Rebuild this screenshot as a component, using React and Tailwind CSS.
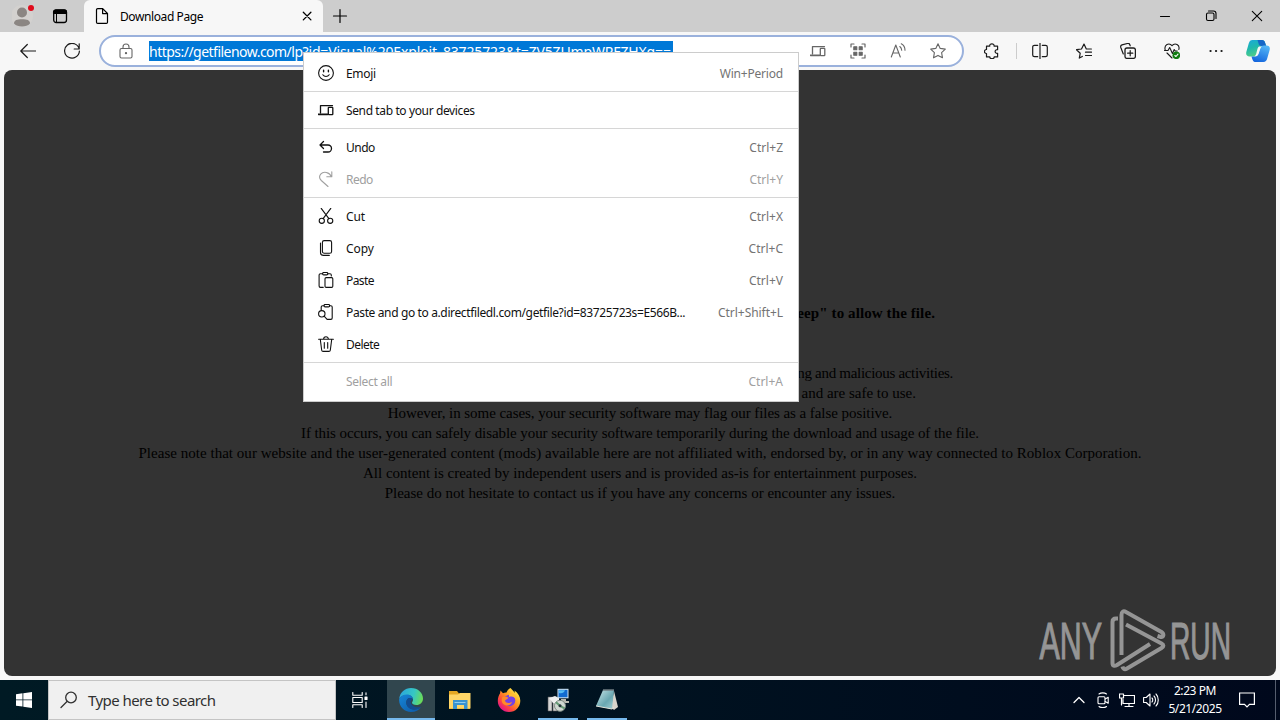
const menuGroups = [
  [{ label: "Emoji", keys: "Win+Period", icon: "emoji", track: "tracking-[-0.3px]", keyTrack: "tracking-[-0.2px]" }],
  [{ label: "Send tab to your devices", keys: "", icon: "devices", track: "tracking-[-0.38px]", keyTrack: "" }],
  [
    { label: "Undo", keys: "Ctrl+Z", icon: "undo", track: "tracking-[-0.5px]", keyTrack: "tracking-[0px]" },
    { label: "Redo", keys: "Ctrl+Y", icon: "redo", track: "tracking-[-0.5px]", keyTrack: "tracking-[0px]", disabled: true },
  ],
  [
    { label: "Cut", keys: "Ctrl+X", icon: "cut", track: "tracking-[-0.1px]", keyTrack: "tracking-[0px]" },
    { label: "Copy", keys: "Ctrl+C", icon: "copy", track: "tracking-[-0.1px]", keyTrack: "tracking-[0px]" },
    { label: "Paste", keys: "Ctrl+V", icon: "paste", track: "tracking-[-0.6px]", keyTrack: "tracking-[0px]" },
    { label: "Paste and go to a.directfiledl.com/getfile?id=83725723s=E566B...", keys: "Ctrl+Shift+L", icon: "pasteGo", track: "tracking-[-0.37px]", keyTrack: "tracking-[-0.05px]" },
    { label: "Delete", keys: "", icon: "trash", track: "tracking-[-0.55px]", keyTrack: "" },
  ],
  [{ label: "Select all", keys: "Ctrl+A", icon: "", track: "tracking-[-0.3px]", keyTrack: "tracking-[0px]", disabled: true }],
];

const icons = {
  emoji: (
    <>
      <circle cx="8" cy="8" r="7.4" />
      <path d="M4.8 9.8c1.6 2.3 4.8 2.3 6.4 0" />
      <path d="M5.6 5.2v1.6M10.4 5.2v1.6" strokeWidth="1.4" />
    </>
  ),
  devices: (
    <>
      <path d="M2.5 11V3.6h12" strokeWidth="1.3" />
      <path d="M0.5 12.3h9" strokeWidth="1.8" />
      <rect x="10.3" y="5.4" width="4.5" height="7.2" rx="0.6" strokeWidth="1.3" />
    </>
  ),
  undo: <path d="M5.5 2.5 2 6l3.5 3.5M2 6h8a3.5 3.5 0 0 1 0 7H5.5" strokeWidth="1.3" />,
  redo: <path d="M13.8 0.8v5h-5M13.5 5.8C11.5 1 5.5-.2 2.7 3.2c-1.8 2.3-1.2 4.6.6 6.3l6.7 6" strokeWidth="1.1" />,
  cut: (
    <>
      <circle cx="3.8" cy="12.8" r="2.6" />
      <circle cx="12.2" cy="12.8" r="2.6" />
      <path d="M3.2 .4l7.7 10.2M12.8 .4 5.1 10.6" />
    </>
  ),
  copy: (
    <>
      <rect x="4.4" y=".6" width="9.2" height="12.6" rx="1.8" />
      <path d="M2.5 3v9.4c0 1.8 1 3 2.8 3h6" />
    </>
  ),
  paste: (
    <>
      <path d="M5.2 15.4H2.4c-.8 0-1.3-.5-1.3-1.3V3c0-.8.5-1.3 1.3-1.3h2.2M9.8 1.7H12c.8 0 1.3.5 1.3 1.3v1" />
      <rect x="4.6" y=".5" width="5.2" height="2.4" rx="1.1" />
      <rect x="7" y="5.6" width="7.8" height="9.8" rx="1.2" />
    </>
  ),
  pasteGo: (
    <>
      <path d="M3.2 6V3c0-.8.5-1.3 1.3-1.3h1.600M11.600 1.700h1.300c.8 0 1.300.5 1.300 1.300v11.100c0 .8-.5 1.300-1.300 1.300H9.500" />
      <rect x="6" y=".5" width="5.6" height="2.4" rx="1.1" />
      <circle cx="3.8" cy="9.800" r="3.200" />
      <path d="m6.100 12.100 3 3.200" />
    </>
  ),
  trash: (
    <>
      <path d="M.6 3.3h14.8M5.6 3.2C5.6-.1 10.4-.1 10.4 3.2M2.3 3.5l1.4 10.7c.1.8.6 1.2 1.4 1.2h5.8c.8 0 1.3-.4 1.4-1.2l1.4-10.7M6.3 6.5v5.7M9.7 6.5v5.7" />
    </>
  ),
};

const Icon = ({ children, className = "w-4 h-4", box = "0 0 16 16" }) => (
  <svg
    viewBox={box}
    className={`block shrink-0 ${className}`}
    fill="none"
    stroke="currentColor"
    strokeWidth="1.1"
    strokeLinecap="round"
    strokeLinejoin="round"
  >
    {children}
  </svg>
);

const TabStrip = () => (
  <div className="flex h-8 bg-[#cdcdcd]">
    <div className="flex w-[84px] items-center rounded-br-md pl-3">
      <svg viewBox="0 0 24 24" className="h-6 w-6">
        <circle cx="10" cy="12" r="11" fill="#d3d1cf" />
        <circle cx="10" cy="8.5" r="5" fill="#8b8683" />
        <path d="M2 19.500c0-3.500 3-4.300 8-4.300s8 .8 8 4.300c-2 2.200-4.600 3-8 3s-6-.8-8-3z" fill="#8b8683" />
        <circle cx="19" cy="4" r="3" fill="#e00b1c" />
      </svg>
      <Icon className="ml-4 h-4 w-4">
        <rect x="1.7" y="2" width="12.8" height="12.5" rx="2.5" strokeWidth="1.3" />
        <path d="M1.5 5.500V4c0-1 .8-2 2-2h9c1.200 0 2 1 2 2v1.500z" fill="currentColor" />
        <path d="M4.500 5v9" strokeWidth="1" />
      </Icon>
    </div>
    <div className="flex w-[239px] items-center rounded-t-md bg-[#f7f7f7] pr-2 pl-[10px]">
      <Icon>
        <path d="M2.500 1.800c0-.7.5-1.200 1.200-1.200h5l4.800 4.900v8.700c0 .7-.5 1.200-1.200 1.200H3.700c-.7 0-1.200-.5-1.200-1.200zM8.600.8v4.800h4.800" strokeWidth="1.2" />
      </Icon>
      <span className="ml-[10px] pt-px text-[12px] tracking-[-0.4px] text-black">Download Page</span>
      <Icon className="ml-auto h-4 w-4">
        <path d="m4.300 4.300 7.600 7.600M11.900 4.300l-7.600 7.600" strokeWidth="1.3" />
      </Icon>
    </div>
    <div className="flex flex-1 items-center pl-[9px]">
      <Icon>
        <path d="M8 1.500v13M1.500 8h13" strokeWidth="1.2" />
      </Icon>
      <div className="mr-[15px] ml-auto flex gap-[30px]">
        <Icon>
          <path d="M3.500 8.500h9" />
        </Icon>
        <Icon>
          <rect x="3.500" y="5" width="7.500" height="7.500" rx="1.500" />
          <path d="M5.500 3h5c1.500 0 2.500 1 2.500 2.500v5" />
        </Icon>
        <Icon>
          <path d="m3.300 3.300 9.400 9.400M12.700 3.300l-9.400 9.400" />
        </Icon>
      </div>
    </div>
  </div>
);

const CopilotLogo = () => (
  <svg viewBox="0 0 24 22" className="h-[22px] w-6">
    <defs>
      <linearGradient id="cpA" x1="0" y1="0" x2=".4" y2="1">
        <stop offset="0" stopColor="#1aa8dd" />
        <stop offset=".5" stopColor="#20b8ad" />
        <stop offset="1" stopColor="#53cf86" />
      </linearGradient>
      <linearGradient id="cpB" x1=".7" y1="0" x2=".3" y2="1">
        <stop offset="0" stopColor="#53b6f6" />
        <stop offset="1" stopColor="#1465dd" />
      </linearGradient>
    </defs>
    <path d="M6.500 0h9.500c1.700 0 2.600 1 3.100 2.700L20.200 6h-2.700c-2 0-3 1-3.600 3L12.500 13c-.6 2-1.500 3.500-4 3.500h-5C1 16.500-.3 15 .3 12L2.800 3.300C3.400 1.200 4.500 0 6.500 0z" fill="url(#cpA)" />
    <path d="M11.500 0H16c1.700 0 2.600 1 3.100 2.700L20.200 6h-4.500c-2 0-3-1-3.300-3z" fill="#1666c7" />
    <path d="M18 5.500h2.500c2.500 0 3.800 1.500 3.200 4.300l-2.500 8.700c-.6 2.200-1.700 3.500-3.700 3.500H9C7.500 22 6.500 20.500 5.500 16.500h3c2.500 0 3.400-1.500 4-3.500l1.500-4.500c.6-1.900 1.800-3 4-3z" fill="url(#cpB)" />
    <path d="M13.300 6.500h2.400c-.8.700-1.200 1.500-1.500 2.500l-1.500 4.500c-.5 1.500-1.200 2.500-2.700 2.800H8.300c1.200-.7 1.500-1.300 1.900-2.500l1.300-5c.4-1.300.9-2 1.800-2.300z" fill="#f7f7f7" />
  </svg>
);

const Toolbar = () => (
  <div className="flex h-[38px] items-center bg-[#f7f7f7] pr-[10px] pl-5 text-[#1b1b1b]">
    <Icon>
      <path d="M7.300 1.500.8 8l6.500 6.500M1 8h15" strokeWidth="1.2" />
    </Icon>
    <Icon className="ml-7 h-4 w-4">
      <path d="M15.200 6A7.400 7.400 0 1 0 15.400 8M15.200.8V6h-5" strokeWidth="1.2" />
    </Icon>
    <div className="ml-[19px] flex h-[32px] w-[865px] items-center rounded-full border-2 border-[#9ab1dc] bg-white pr-[16px] pl-[17px] text-[#666]">
      <Icon>
        <rect x="2" y="5.500" width="12" height="9.500" rx="1.500" />
        <path d="M5 5.500V4a3 3 0 0 1 6 0v1.500" />
        <circle cx="8" cy="10.200" r=".6" fill="currentColor" />
      </Icon>
      <div className="ml-[15px] h-5 w-[524px] overflow-hidden bg-[#0078d7] text-[14px] leading-[21px] whitespace-nowrap text-white">
        <span className="tracking-[-0.52px]">https://getfilenow.com/lp</span>
        <span className="tracking-[-0.15px]">?id=Visual%20Exploit_83725723&amp;t=ZV5ZUmpWRFZHXg==</span>
      </div>
      <div className="ml-auto flex items-center gap-6">
        <Icon>{icons.devices}</Icon>
        <Icon>
          <path d="M1 4V1h3M12 1h3v3M15 12v3h-3M4 15H1v-3" strokeWidth="1.2" />
          <path d="M3.800 3.800h3v3h-3zM9.200 3.800h3v3h-3zM3.800 9.200h3v3h-3zM9.200 9.200h3v3h-3z" fill="currentColor" />
        </Icon>
        <Icon>
          <path d="m1.300 14 4.500-12 4.500 12M2.900 10h5.800M9.800 3.500c1.200.9 1.800 2 1.900 3.700M11.300.8c2.400 1.300 3.700 3.500 3.700 6.400" />
        </Icon>
        <Icon>
          <path d="m8 .8 2.200 4.600 5.100.7-3.700 3.600.9 5.100L8 12.400l-4.500 2.400.9-5.100L.7 6.100l5.100-.7z" />
        </Icon>
      </div>
    </div>
    <Icon className="ml-5 h-4 w-4">
      <path d="M2.500 3.200h3.200C5.300 0 10.500 0 10.100 3.200h3.500v3.500c-3.300-.4-3.300 4 0 3.600v3.600h-3.400c.3 2.400-4.700 2.400-4.400 0H2.500v-3.400c-2.700.2-2.700-4.200 0-4z" strokeWidth="1.2" />
    </Icon>
    <div className="ml-4 h-4 w-px bg-[#ccc]" />
    <Icon className="ml-[15px] h-4 w-4">
      <path d="M8 0v16M5.700 2.300H2.500C1.500 2.300.7 3 .7 4v8c0 1 .8 1.700 1.800 1.700h3.200M10.300 2.300h3.200c1 0 1.800.7 1.800 1.700v8c0 1-.8 1.700-1.800 1.700h-3.200" strokeWidth="1.2" />
    </Icon>
    <Icon className="ml-7 h-4 w-4">
      <path d="M15.400 6H10.300L8 1 5.500 6 .5 6.700l3.700 3.600-.9 4.800 3-1.700M9.500 9.200h6M9.500 12.500h6" strokeWidth="1.2" />
    </Icon>
    <Icon className="ml-7 h-4 w-4">
      <rect x="5" y="5" width="10.400" height="10.400" rx="2" strokeWidth="1.3" />
      <path d="M10.200 7.600v5.200M7.600 10.200h5.200M3.300 11 .8 4.500C.4 3.200.9 2.300 2 1.900l5.500-1.400c1-.3 2 .3 2.300 1.300l.4 1" strokeWidth="1.2" />
    </Icon>
    <Icon className="ml-7 h-4 w-4">
      <path d="M1.200 7C-.2 2 5-1 8 2.700 11-1 16.200 2 14.800 6.500M.5 7.500H4l1.700-3 2.700 6 1.800-4 1 1.500h2M3 10l5 5" strokeWidth="1.1" />
      <circle cx="12.300" cy="12.300" r="3.800" fill="#107c10" stroke="none" />
      <path d="m10.800 12.500 1.200 1 2-2.300" stroke="white" />
    </Icon>
    <Icon className="ml-7 h-4 w-4">
      <path d="M2.500 8h.1M8 8h.1M13.500 8h.1" strokeWidth="2.2" />
    </Icon>
    <div className="ml-auto">
      <CopilotLogo />
    </div>
  </div>
);

const AnyRunLogo = () => (
  <svg
    viewBox="0 0 200 70"
    className="absolute right-[37px] bottom-0 h-[70px] w-[200px] overflow-visible"
    fontFamily="Liberation Sans"
    fontSize="52"
  >
    <g fill="#959595" stroke="#959595" strokeWidth="1.2">
      <text x="0.500" y="53" textLength="62.500" lengthAdjust="spacingAndGlyphs">ANY</text>
      <text x="131" y="53" textLength="61" lengthAdjust="spacingAndGlyphs">RUN</text>
    </g>
    <g fill="none" stroke="#959595" strokeWidth="4" strokeLinejoin="round">
      <path d="M79 12.500h-2c-2.500 0-3.500 1-3.500 3.500v41c0 3 2 3.500 4.500 2L111 38" />
      <path d="M82.500 49V9c0-3.500 2-4.500 4.500-3l35.500 20c3 2 2 5.500-.5 5l-3.500-1" />
      <path d="m87 18.500 35.500 19c2.500 1.500 2.500 3 0 4.500L88 62.500c-2.500 1.500-4 .5-4.500-2" />
    </g>
  </svg>
);

const PageContent = () => (
  <div className="bg-[#f7f7f7] px-1 pb-1">
    <div className="relative h-[606px] overflow-hidden rounded-lg bg-[#333] pt-[233px] text-center font-['Liberation_Serif'] text-[15px] leading-5 text-black">
      <p className="mx-auto flex w-[590px] justify-end font-bold tracking-[0.1px] whitespace-nowrap">
        If the browser blocks the download, press "Keep" to allow the file.
      </p>
      <div className="mt-10 whitespace-nowrap">
        <p className="mx-auto flex w-[626px] justify-end tracking-[-0.3px]">Our team works to protect users from phishing and malicious activities.</p>
        <p className="mx-auto flex w-[552px] justify-end">All of our files are checked regularly and are safe to use.</p>
        <p className="tracking-[-0.06px]">However, in some cases, your security software may flag our files as a false positive.</p>
        <p className="tracking-[-0.08px]">
          If this occurs, you can safely disable your security software temporarily during the download and usage of the file.
        </p>
        <p className="tracking-[0.03px]">
          Please note that our website and the user-generated content (mods) available here are not affiliated with, endorsed by, or in any way
          connected to Roblox Corporation.
        </p>
        <p>All content is created by independent users and is provided as-is for entertainment purposes.</p>
        <p>Please do not hesitate to contact us if you have any concerns or encounter any issues.</p>
      </div>
      <AnyRunLogo />
    </div>
  </div>
);

const ContextMenu = () => (
  <div className="absolute top-[52px] left-[303px] w-[496px] border border-[#ccc] bg-white py-1 text-[12px]">
    {menuGroups.map((group, index) => (
      <div key={index}>
        {index > 0 && <div className="my-0.5 h-px bg-[#d6d6d6]" />}
        {group.map((item) => (
          <div
            key={item.label}
            className={`flex h-8 items-center pr-[15px] pl-[14px] whitespace-nowrap ${item.disabled ? "text-[#a0a0a0]" : "text-[#111]"}`}
          >
            <div className="w-7">{item.icon && <Icon>{icons[item.icon]}</Icon>}</div>
            <span className={`pt-px ${item.track}`}>{item.label}</span>
            <span className={`ml-auto pt-px ${item.keyTrack} ${item.disabled ? "text-[#a0a0a0]" : "text-[#737373]"}`}>{item.keys}</span>
          </div>
        ))}
      </div>
    ))}
  </div>
);

const EdgeLogo = () => (
  <svg viewBox="0 0 24 24" className="h-6 w-6">
    <defs>
      <linearGradient id="edgeTop" x1="0" y1=".3" x2="1" y2=".5">
        <stop offset="0" stopColor="#2ba5dd" />
        <stop offset=".6" stopColor="#36c7c3" />
        <stop offset="1" stopColor="#6bdc57" />
      </linearGradient>
      <linearGradient id="edgeLow" x1="0" y1="0" x2="1" y2="1">
        <stop offset="0" stopColor="#1686d8" />
        <stop offset="1" stopColor="#0d57a4" />
      </linearGradient>
    </defs>
    <path d="M.2 11C1 4 6 0 12 0c7 0 12 5 12 10.500 0 4-3 6.500-6.500 6.500-3 0-4.500-1.200-4.500-2.200 0-.8 1-1.300 1-3C14 9 11.500 7 8 7 4 7 1.500 8.500.2 11z" fill="url(#edgeTop)" />
    <path d="M.2 11C1.500 8 4.500 6.500 8 6.500c3.500 0 6 2.200 6 5-.5-1-1.600-1.500-3-1.500-2.300 0-3.700 2-3.700 4.500 0 4 3.700 7 8.200 7 2.500 0 5-.9 6.500-2.200C20 22.500 16.500 24 12 24 5 24-.5 18 .2 11z" fill="url(#edgeLow)" />
    <path d="M11 10c-2.300 0-3.700 2-3.700 4.500 0 4.800 5 8.300 10.200 6.800 2-.6 3.800-1.500 4.800-2.900-4 2.100-9.800.2-10.600-3.600-.4-2 .6-2.800 2-3.300-.5-1-1.400-1.500-2.700-1.500z" fill="#124c91" />
  </svg>
);

const ExplorerLogo = () => (
  <svg viewBox="0 0 24 22" className="h-[22px] w-6">
    <path d="M1 2h8l2 2.500h11V20H1z" fill="#e5a823" />
    <path d="M1 5.500h9L12 4h10.500v15.500H1z" fill="#ffd667" />
    <path d="M5 11h14.500v9H16v-4H9v4H5z" fill="#3a93d0" />
    <path d="M6.500 13.500h11" stroke="#8fcdf0" />
  </svg>
);

const FirefoxLogo = () => (
  <svg viewBox="0 0 24 24" className="h-6 w-6">
    <defs>
      <linearGradient id="ffOuter" x1=".9" y1=".1" x2=".2" y2=".9">
        <stop offset="0" stopColor="#fff14a" />
        <stop offset=".45" stopColor="#ff9620" />
        <stop offset=".75" stopColor="#ff493c" />
        <stop offset="1" stopColor="#e31587" />
      </linearGradient>
    </defs>
    <path d="M13.500 0c2 2 3.500 3.500 4 5 .3-.8.2-1.500 0-2.500 3.500 2.500 5.800 6 5.800 10.200C23.300 19 18.500 24 12 24S.8 19 .8 13C.8 9.500 2 7 3 5.500l.5-3L6 5.200c1-.6 2.500-.8 3.500-.7 1-2.500 2.500-3.700 4-4.500z" fill="url(#ffOuter)" />
    <circle cx="12.500" cy="12.500" r="5.800" fill="#7542e5" />
    <path d="M5.500 9c2-1 4-.5 6 .8-1 1.700-3.500 1.700-3.500 3.200 1 2 4 3 7 .7-.8 4-6 5-9 2C4.300 14 4.500 11 5.500 9z" fill="#ff8a2a" />
    <path d="M12 6c3-1 6.500 1 7 5-1.500-2-4-3-7-2z" fill="#ffbd32" />
  </svg>
);

const InstallerLogo = () => (
  <svg viewBox="0 0 24 24" className="h-6 w-6">
    <path d="M2 9h4v14H2zM7 12h4v11H7z" fill="#d4d4d4" stroke="#555" strokeWidth=".6" />
    <path d="m3 10 6-2 4 2v5H7z" fill="#efefef" />
    <rect x="11.500" y=".8" width="11" height="9.500" fill="#d8e8f2" />
    <rect x="12.500" y="1.800" width="9" height="7.500" fill="#116bd1" />
    <path d="M13 5c3 1 5-.5 6-2.700h-6z" fill="#56bdf3" />
    <path d="M15 11h5v2h3v2H13v-2h2z" fill="#b9bab1" />
    <circle cx="14" cy="17.800" r="5.500" fill="#d0d8d2" stroke="#7c8982" />
    <path d="m14 17.800-4-3.500M14 17.800l4.500 2.500" stroke="#639a74" strokeWidth="2" />
    <circle cx="14" cy="17.800" r="1.500" fill="#27363a" />
  </svg>
);

const NotepadLogo = () => (
  <svg viewBox="0 0 24 24" className="h-6 w-6">
    <defs>
      <linearGradient id="notePage" x1="0" y1="0" x2="1" y2="1">
        <stop offset="0" stopColor="#cbe6e9" />
        <stop offset=".6" stopColor="#69a7b1" />
        <stop offset="1" stopColor="#a6d0d4" />
      </linearGradient>
    </defs>
    <path d="m19 3 4 16-4 3-3-3z" fill="#d8d4cb" />
    <path d="M8 2h11l-2 19L1 18z" fill="url(#notePage)" />
    <path d="m1 18 16 3 2-1.500" stroke="#e5e5dc" fill="none" />
    <path d="M8 2h11" stroke="#6f7d82" strokeWidth="1.5" />
  </svg>
);

const taskbarApps = [
  { name: "edge", logo: EdgeLogo, slot: "w-12 bg-[#31464e]", bar: "w-12" },
  { name: "explorer", logo: ExplorerLogo, slot: "w-12 ml-px", bar: "" },
  { name: "firefox", logo: FirefoxLogo, slot: "w-12 ml-px", bar: "" },
  { name: "installer", logo: InstallerLogo, slot: "w-12 ml-px", bar: "w-10" },
  { name: "notepad", logo: NotepadLogo, slot: "w-12 ml-px", bar: "w-10" },
];

const Taskbar = () => (
  <div className="flex h-10 bg-linear-to-r from-[#001a24] via-[#001220] to-[#00081c] text-white">
    <div className="flex w-12 items-center justify-center">
      <svg viewBox="0 0 16 16" className="h-4 w-4" fill="white">
        <path d="M0 2.200 6.500 1.300v6.200H0zM7.300 1.200 16 0v7.500H7.300zM0 8.300h6.500v6.300L0 13.700zM7.300 8.300H16V16l-8.700-1.200z" />
      </svg>
    </div>
    <div className="flex w-[288px] items-center border border-[#c4c4c4] bg-[#f0f0f0] pl-[11px] text-[#303030]">
      <Icon className="h-[18px] w-[18px]" box="0 0 18 18">
        <circle cx="11" cy="6.500" r="5.300" strokeWidth="1.3" />
        <path d="m7 10.500-6 6" strokeWidth="1.3" />
      </Icon>
      <span className="ml-[10px] pt-px text-[15px] tracking-[-0.56px]">Type here to search</span>
    </div>
    <div className="flex w-[51px] items-center justify-center pr-[3px]">
      <Icon>
        <path d="M.8.500v2.700h9.400V.5M.8 15.500v-2.700h9.400v2.700M.8 5.500h9.400v5H.8zM14 .8v2M14 10v5.500" />
        <path d="M13 5h2v2.500h-2z" fill="currentColor" />
      </Icon>
    </div>
    {taskbarApps.map(({ name, logo: Logo, slot, bar }) => (
      <div key={name} className={`flex flex-col items-center ${slot}`}>
        <div className="flex h-[38px] items-center pt-0.5">
          <Logo />
        </div>
        {bar && <div className={`h-0.5 bg-[#76b9ed] ${bar}`} />}
      </div>
    ))}
    <div className="ml-auto flex items-center">
      <Icon>
        <path d="m3 10.500 5-5 5 5" strokeWidth="1.3" />
      </Icon>
      <Icon className="ml-2 h-4 w-4">
        <rect x="3" y="4.800" width="7" height="7" rx="1" />
        <path d="m10.200 7 3-1.700v6l-3-1.700M4 2c2-1.500 5.500-1.500 7.500 0M4 14.500c2 1.500 5.500 1.500 7.500 0" />
      </Icon>
      <Icon className="ml-2 h-4 w-4">
        <path d="M5 3.500h10.500v8H4V7.500M10 11.500v3M6 14.500h8M.5 2h4v4h-4zM2.500 6v7" strokeWidth="1.2" />
      </Icon>
      <Icon className="ml-2 h-4 w-4">
        <path d="M.6 5.500h2.600L7 2v12l-3.800-3.500H.6zM9 6c1 1 1 3 0 4M11 4c2 2 2 6 0 8M13 2c3 3 3 9 0 12" />
      </Icon>
      <div className="ml-[6px] w-[60px] pb-px text-center text-[12px] leading-[18px] tracking-[-0.42px] whitespace-nowrap">
        <p>2:23 PM</p>
        <p>5/21/2025</p>
      </div>
      <Icon className="ml-[14px] h-4 w-4">
        <path d="M.6 1h14.800v11.400H10.500L8 15l-2.500-2.600H.6z" strokeWidth="1.2" strokeLinejoin="miter" />
      </Icon>
      <div className="mr-1 ml-5 h-10 w-px bg-[#555d6e]" />
    </div>
  </div>
);

const App = () => (
  <div className="relative h-[720px] w-[1280px] overflow-hidden bg-[#f7f7f7] font-['Noto_Sans',sans-serif]">
    <TabStrip />
    <Toolbar />
    <PageContent />
    <Taskbar />
    <ContextMenu />
  </div>
);

export default App;
